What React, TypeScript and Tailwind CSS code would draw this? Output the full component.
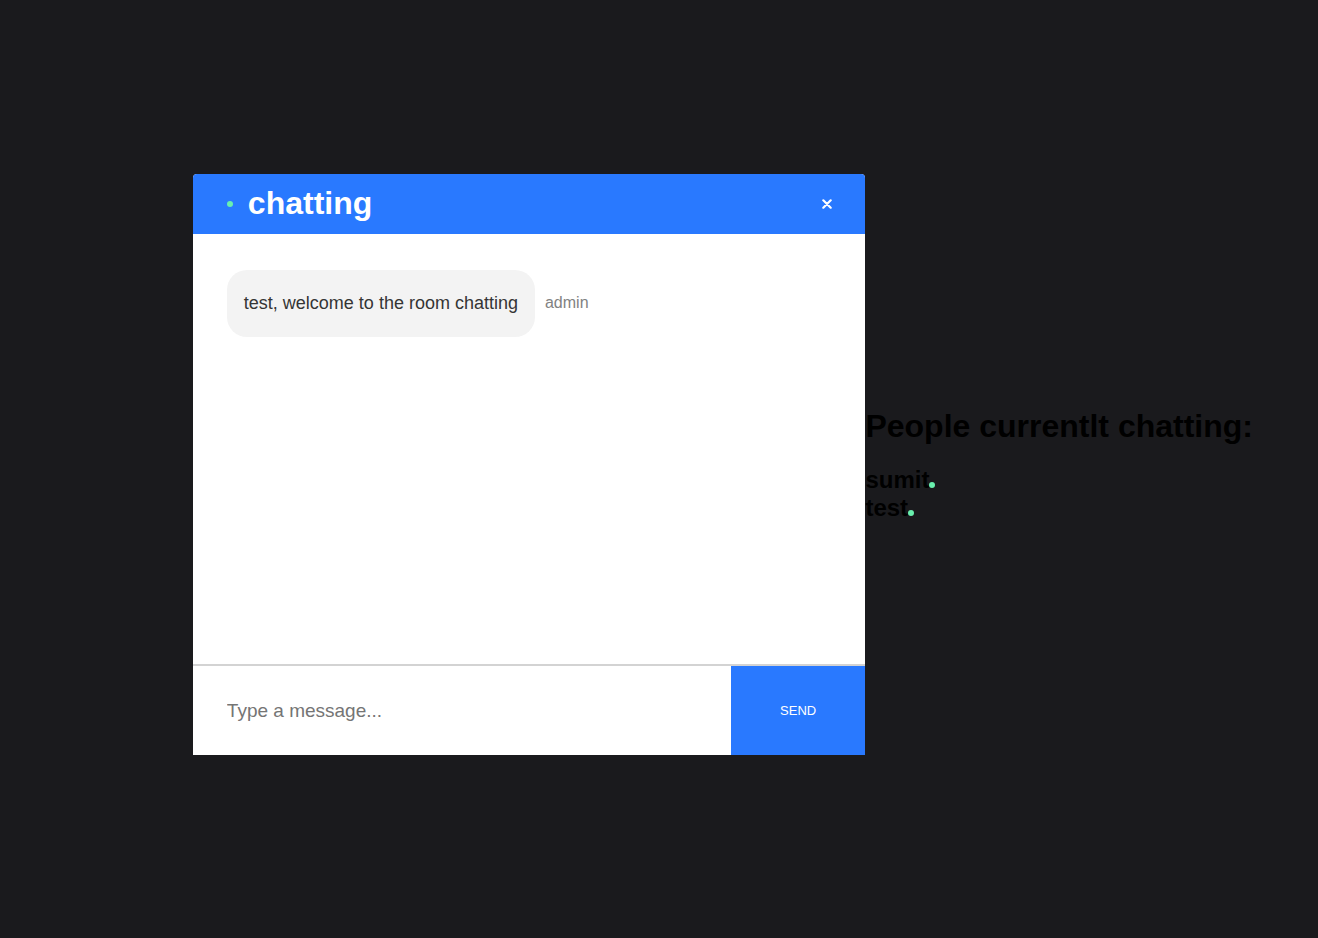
import { useState } from "react";

const people = ["sumit", "test"];

function OnlineDot({ className = "" }: { className?: string }) {
  return (
    <svg className={`size-[6px] shrink-0 ${className}`} viewBox="0 0 6 6" aria-hidden="true">
      <circle cx="3" cy="3" r="3" fill="#69f0ae" />
    </svg>
  );
}

function InfoBar({ room }: { room: string }) {
  return (
    <header className="flex h-[60px] shrink-0 items-center justify-between rounded-t-sm bg-[#2979ff] px-[5%] text-white">
      <div className="flex items-center gap-[15px]">
        <OnlineDot />
        <h1 className="pb-[2px] text-[32px] leading-9 font-bold">{room}</h1>
      </div>
      <a href="/" aria-label="Leave room" className="block">
        <svg className="size-[10px]" viewBox="0 0 10 10" fill="none" stroke="#ffffff" strokeWidth="2.2" strokeLinecap="round" aria-hidden="true">
          <path d="M1.3 1.3L8.7 8.7M8.7 1.3L1.3 8.7" />
        </svg>
      </a>
    </header>
  );
}

function Message({ text, user }: { text: string; user: string }) {
  return (
    <div className="flex items-center gap-[10px]">
      <div className="rounded-[20px] bg-[#f3f3f3] px-[17px] py-[21px]">
        <p className="text-[18px] leading-[25px] text-[#353535]">{text}</p>
      </div>
      <p className="text-base leading-5 text-[#828282]">{user}</p>
    </div>
  );
}

export default function App() {
  const [message, setMessage] = useState("");
  return (
    <div className="flex min-h-screen items-center justify-end bg-[#1a1a1d] pr-[65px] font-['Liberation_Sans',Arial,sans-serif]">
      <main className="mb-[9px] flex min-h-[62vh] w-[51vw] shrink-0 flex-col rounded-t-sm bg-white">
        <InfoBar room="chatting" />
        <section aria-label="Messages" className="grow px-[5%] pt-9">
          <Message text="test, welcome to the room chatting" user="admin" />
        </section>
        <form className="flex border-t-2 border-[#d3d3d3]" onSubmit={(e) => e.preventDefault()}>
          <input
            aria-label="Message"
            placeholder="Type a message..."
            value={message}
            onChange={(e) => setMessage(e.target.value)}
            className="h-[89px] w-4/5 px-[5%] text-[19px] text-black outline-none placeholder:text-[#757575]"
          />
          <button type="submit" className="w-1/5 bg-[#2979ff] text-[13px] text-white uppercase">
            Send
          </button>
        </form>
      </main>
      <aside className="pb-2 text-black">
        <h1 className="text-[32px] leading-9 font-bold">People currentlt chatting:</h1>
        <ul className="mt-[22px] text-2xl leading-7 font-bold">
          {people.map((name) => (
            <li key={name} className="flex items-center">
              {name}
              <OnlineDot className="mt-[10px]" />
            </li>
          ))}
        </ul>
      </aside>
    </div>
  );
}
